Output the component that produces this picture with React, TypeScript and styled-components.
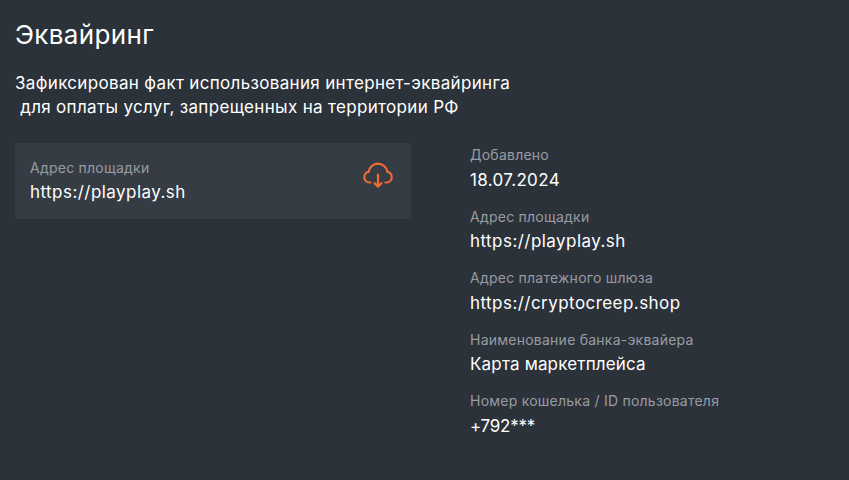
import React from "react";
import styled, { createGlobalStyle } from "styled-components";

const Global = createGlobalStyle`
  html, body { margin: 0; padding: 0; background: #2c323a; }
  body { font-family: "Inter", "Noto Sans", sans-serif; }
`;

const Page = styled.div`
  width: 849px;
  height: 480px;
  box-sizing: border-box;
  padding: 20px 15px 0;
  background: #2c323a;
  color: #fff;
  overflow: hidden;
`;

const Title = styled.h1`
  margin: 0 0 21px;
  font-size: 26px;
  line-height: 30px;
  font-weight: 400;
  letter-spacing: 0.35px;
  color: #fff;
`;

const Description = styled.p`
  margin: 0 0 24px;
  font-size: 17px;
  line-height: 24px;
  font-weight: 400;
  letter-spacing: 0.33px;
  white-space: pre-wrap;
`;

const Columns = styled.div`
  display: grid;
  grid-template-columns: 396px 1fr;
  column-gap: 59px;
  align-items: start;
`;

const Card = styled.div`
  height: 76px;
  box-sizing: border-box;
  padding: 0 15px 2px;
  background: #363c44;
  display: flex;
  align-items: center;
  justify-content: space-between;
`;

const Fields = styled.div`
  display: flex;
  flex-direction: column;
  gap: 13px;
`;

const Field = styled.div`
  display: flex;
  flex-direction: column;
  gap: 2.5px;
`;

const Label = styled.span`
  font-size: 14px;
  line-height: 23px;
  letter-spacing: 0.24px;
  color: #989ca2;
`;

const Value = styled.span<{ $spacing?: number }>`
  font-size: 17px;
  line-height: 23px;
  letter-spacing: ${(p) => p.$spacing ?? 0.45}px;
  color: #fff;
`;

const IconWrap = styled.svg`
  width: 32px;
  height: 32px;
  margin: 0 2px 10px 0;
  flex: none;
`;

const CloudDownload = () => (
  <IconWrap viewBox="0 0 32 32" fill="none" stroke="#f26b33" strokeWidth="2.2" strokeLinecap="round" strokeLinejoin="round">
    <path d="M8.5 23.5H7.5a5.4 5.4 0 0 1-.9-10.7 A9.8 9.8 0 0 1 16 4.6 a9.8 9.8 0 0 1 9.4 8.2 a5.4 5.4 0 0 1-.9 10.7 H23.5" />
    <path d="M16 15.5v11" />
    <path d="M12.6 24.2l3.4 3.4 3.4-3.4" />
  </IconWrap>
);

const fields: { label: string; value: string; spacing?: number }[] = [
  { label: "Добавлено", value: "18.07.2024", spacing: 0.35 },
  { label: "Адрес площадки", value: "https://playplay.sh" },
  { label: "Адрес платежного шлюза", value: "https://cryptocreep.shop" },
  { label: "Наименование банка-эквайера", value: "Карта маркетплейса", spacing: 0.17 },
  { label: "Номер кошелька / ID пользователя", value: "+792***", spacing: -0.25 },
];

export default function App() {
  return (
    <Page>
      <Global />
      <Title>Эквайринг</Title>
      <Description>{"Зафиксирован факт использования интернет-эквайринга\n для оплаты услуг, запрещенных на территории РФ"}</Description>
      <Columns>
        <Card>
          <Field>
            <Label>Адрес площадки</Label>
            <Value>https://playplay.sh</Value>
          </Field>
          <CloudDownload />
        </Card>
        <Fields>
          {fields.map((f) => (
            <Field key={f.label}>
              <Label>{f.label}</Label>
              <Value $spacing={f.spacing}>{f.value}</Value>
            </Field>
          ))}
        </Fields>
      </Columns>
    </Page>
  );
}
